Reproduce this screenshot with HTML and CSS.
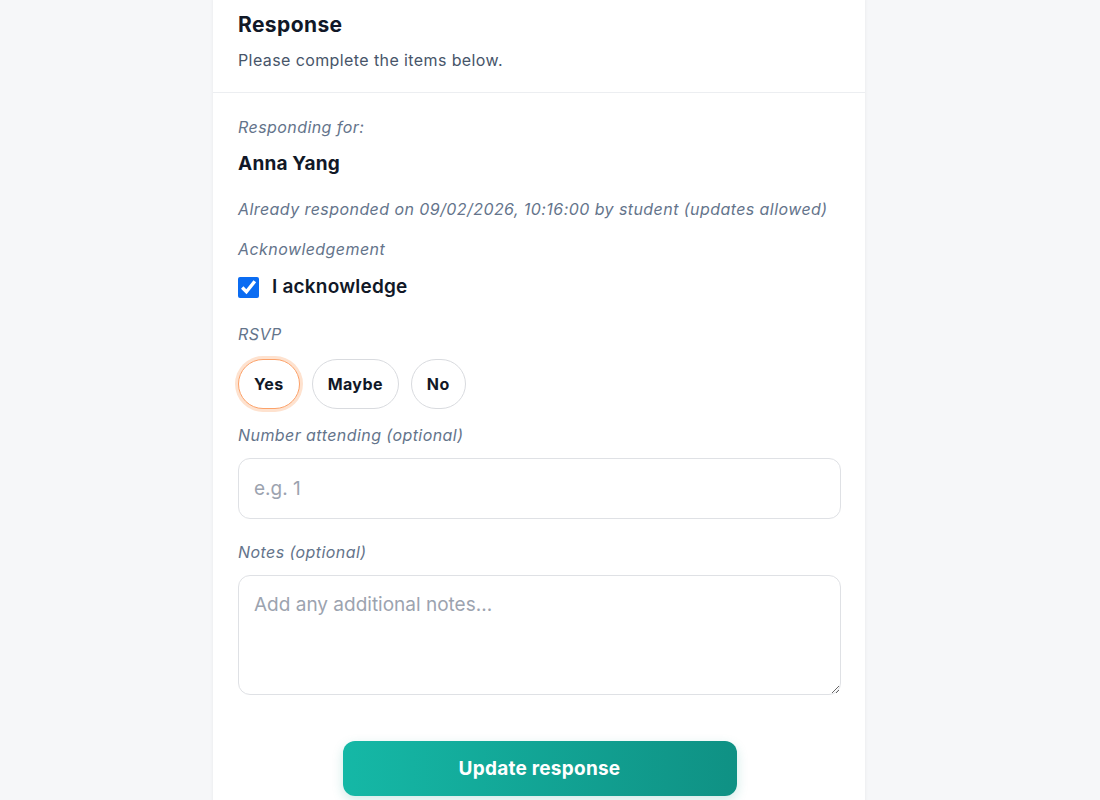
FILE: index.html
```html
<!DOCTYPE html>
<html lang="en">
<head>
    <meta charset="UTF-8">
    <meta name="viewport" content="width=device-width, initial-scale=1.0">
    <title>Response</title>
    <link rel="stylesheet" href="styles.css">
</head>
<body>
    <div class="page">
        <div class="response-card">
            <!-- Card Header -->
            <div class="card-header">
                <h2>Response</h2>
                <p>Please complete the items below.</p>
            </div>

            <!-- Card Body -->
            <form class="card-body">
                <p class="field-label">Responding for:</p>
                <p class="student-name">Anna Yang</p>
                <p class="responded-note">Already responded on 09/02/2026, 10:16:00 by student (updates allowed)</p>

                <p class="field-label ack-label">Acknowledgement</p>
                <label class="check-row">
                    <input type="checkbox" checked>
                    <span>I acknowledge</span>
                </label>

                <p class="field-label rsvp-label">RSVP</p>
                <div class="pill-group">
                    <button type="button" class="pill active">Yes</button>
                    <button type="button" class="pill">Maybe</button>
                    <button type="button" class="pill">No</button>
                </div>

                <div class="form-group attend-group">
                    <label class="field-label" for="attending">Number attending (optional)</label>
                    <input type="text" id="attending" class="form-control" placeholder="e.g. 1">
                </div>

                <div class="form-group notes-group">
                    <label class="field-label" for="notes">Notes (optional)</label>
                    <textarea id="notes" class="form-control notes-area" placeholder="Add any additional notes..."></textarea>
                </div>

                <div class="submit-row">
                    <button type="submit" class="submit-btn">Update response</button>
                </div>
            </form>
        </div>
    </div>
</body>
</html>
```

FILE: styles.css
```css
/* General Styling */
body {
    font-family: 'Inter', 'Noto Sans', sans-serif;
    background-color: #f6f7f9;
    color: #0f172a;
    margin: 0;
    padding: 0;
}

p {
    margin: 0;
}

.page {
    display: flex;
    justify-content: center;
    padding-right: 22px;
}

/* Card */
.response-card {
    width: 652px;
    margin-top: -16px;
    background-color: white;
    border-radius: 16px;
    box-shadow: 0 1px 4px rgba(15, 23, 42, 0.06);
}

.card-header {
    padding: 27px 25px 21px;
    border-bottom: 1px solid #eceef1;
}

.card-header h2 {
    margin: 0;
    font-size: 21px;
    line-height: 28px;
    font-weight: 700;
    letter-spacing: 0.4px;
    color: #111827;
}

.card-header p {
    margin-top: 10px;
    font-size: 16px;
    line-height: 22px;
    letter-spacing: 0.4px;
    color: #475569;
}

.card-body {
    padding: 23px 24px 30px 25px;
}

/* Labels */
.field-label {
    display: block;
    font-size: 16px;
    line-height: 22px;
    letter-spacing: 0.43px;
    font-style: italic;
    color: #64748b;
}

.student-name {
    margin-top: 13px;
    font-size: 19px;
    line-height: 26px;
    font-weight: 700;
    letter-spacing: 0.2px;
    color: #111827;
}

.responded-note {
    margin-top: 21px;
    font-size: 16px;
    line-height: 22px;
    letter-spacing: 0.43px;
    font-style: italic;
    color: #64748b;
}

.ack-label {
    margin-top: 18px;
}

/* Checkbox */
.check-row {
    display: flex;
    align-items: center;
    gap: 13px;
    margin-top: 13px;
    font-size: 19px;
    line-height: 28px;
    font-weight: 600;
    letter-spacing: 0.2px;
    color: #111827;
}

.check-row input {
    width: 21px;
    height: 21px;
    margin: 0;
    accent-color: #0b6cf2;
}

.rsvp-label {
    margin-top: 22px;
}

/* RSVP pills */
.pill-group {
    display: flex;
    gap: 12px;
    margin-top: 14px;
}

.pill {
    height: 50px;
    padding: 0 15px;
    border: 1px solid #d9dbdf;
    border-radius: 25px;
    background-color: white;
    font-family: inherit;
    font-size: 16px;
    font-weight: 700;
    letter-spacing: 0.4px;
    color: #111827;
    cursor: pointer;
}

.pill.active {
    border-color: #fca26a;
    box-shadow: 0 0 0 3px #fee2cf;
}

/* Inputs */
.form-group {
    display: flex;
    flex-direction: column;
    gap: 12px;
}

.attend-group {
    margin-top: 15px;
}

.notes-group {
    margin-top: 22px;
}

.form-control {
    box-sizing: border-box;
    width: 100%;
    height: 61px;
    padding: 0 15px;
    border: 1px solid #dfe1e5;
    border-radius: 12px;
    font-family: inherit;
    font-size: 19px;
    color: #111827;
    background-color: white;
}

.form-control::placeholder {
    color: #9ca3af;
}

.notes-area {
    height: 120px;
    padding: 17px 15px;
    resize: vertical;
}

/* Submit */
.submit-row {
    display: flex;
    justify-content: center;
    margin-top: 46px;
}

.submit-btn {
    width: 394px;
    height: 55px;
    border: none;
    border-radius: 12px;
    background: linear-gradient(90deg, #15b8a6, #0f9184);
    box-shadow: 0 4px 12px rgba(13, 148, 136, 0.2);
    font-family: inherit;
    font-size: 19px;
    font-weight: 700;
    letter-spacing: 0.25px;
    color: white;
    cursor: pointer;
}
```
